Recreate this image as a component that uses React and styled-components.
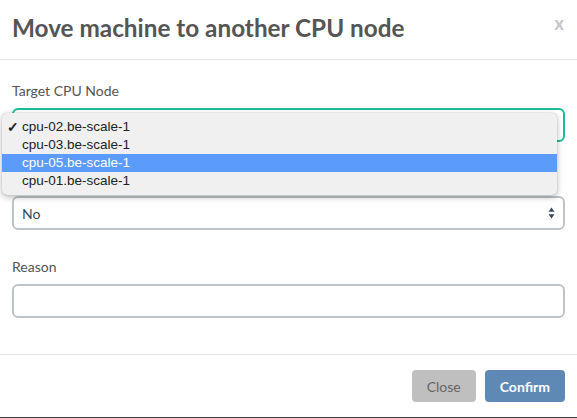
import React from "react"
import styled, { createGlobalStyle } from "styled-components"

const GlobalStyle = createGlobalStyle`
  html, body {
    margin: 0;
    padding: 0;
    background: #3a3a3a;
  }
  * {
    box-sizing: border-box;
  }
`

const Modal = styled.div`
  width: 577px;
  height: 417px;
  background: #fff;
  font-family: Lato, "Open Sans", sans-serif;
  color: #555;
  display: flex;
  flex-direction: column;
`

const Header = styled.div`
  height: 60px;
  padding: 13px 12px 0;
  border-bottom: 1px solid #e5e5e5;
  display: flex;
  justify-content: space-between;
  align-items: flex-start;
`

const Title = styled.h4`
  margin: 0;
  font-size: 24.3px;
  line-height: 29px;
  font-weight: 700;
  color: #555;
`

const CloseX = styled.span`
  font-size: 18px;
  font-weight: 700;
  line-height: 20px;
  color: #c4c4c4;
  margin-right: 1px;
`

const Body = styled.div`
  padding: 21px 12px 36px;
  display: flex;
  flex-direction: column;
  gap: 27px;
`

const Group = styled.div`
  position: relative;
  display: flex;
  flex-direction: column;
`

const Label = styled.label`
  font-size: 14px;
  line-height: 20px;
  height: 20px;
  margin-bottom: 7px;
  color: #555;
`

const Field = styled.div`
  height: 34px;
  border: 2px solid ${(p) => (p.focused ? "#1abc9c" : "#bdc3c7")};
  border-radius: 6px;
  padding: 0 8px;
  display: flex;
  align-items: center;
  justify-content: space-between;
  font-size: 14px;
  color: #34495e;
`

const Arrows = () => (
  <svg width="7" height="12" viewBox="0 0 7 12">
    <path d="M3.5 0.5 L6.5 4.8 L0.5 4.8 Z" fill="#34495e" />
    <path d="M3.5 11.5 L6.5 7.2 L0.5 7.2 Z" fill="#34495e" />
  </svg>
)

// native select popup, open over the first field
const Dropdown = styled.ul`
  position: absolute;
  left: -10px;
  top: 32px;
  width: 555px;
  margin: 0;
  padding: 5px 0;
  list-style: none;
  background: #f0f0f0;
  border-radius: 5px;
  box-shadow: 0 2px 6px rgba(0, 0, 0, 0.28), 0 0 1px rgba(0, 0, 0, 0.3);
  font-family: "Liberation Sans", Arial, sans-serif;
  font-size: 13.5px;
  z-index: 2;
`

const Option = styled.li`
  height: 18px;
  line-height: 18px;
  padding-left: 20px;
  position: relative;
  color: ${(p) => (p.active ? "#fff" : "#222")};
  background: ${(p) => (p.active ? "#5b9bfa" : "transparent")};
`

const Check = styled.span`
  position: absolute;
  left: 5px;
  top: 0;
  font-size: 14px;
  font-weight: 700;
`

const Footer = styled.div`
  border-top: 1px solid #e5e5e5;
  padding: 15px 12px;
  display: flex;
  justify-content: flex-end;
  gap: 9px;
`

const Button = styled.button`
  height: 32px;
  padding: 0 15px;
  border: none;
  border-radius: 4px;
  font-family: Lato, sans-serif;
  font-size: 14px;
  font-weight: ${(p) => (p.primary ? 700 : 400)};
  color: ${(p) => (p.primary ? "#fff" : "#666")};
  background: ${(p) => (p.primary ? "#5e89b4" : "#bfbfbf")};
`

const nodes = [
  { name: "cpu-02.be-scale-1", checked: true },
  { name: "cpu-03.be-scale-1" },
  { name: "cpu-05.be-scale-1", active: true },
  { name: "cpu-01.be-scale-1" },
]

export default function App() {
  return (
    <>
      <GlobalStyle />
      <Modal>
        <Header>
          <Title>Move machine to another CPU node</Title>
          <CloseX>x</CloseX>
        </Header>
        <Body>
          <Group>
            <Label>Target CPU Node</Label>
            <Field focused>
              <span />
              <Arrows />
            </Field>
            <Dropdown>
              {nodes.map((n) => (
                <Option key={n.name} active={n.active}>
                  {n.checked && <Check>✓</Check>}
                  {n.name}
                </Option>
              ))}
            </Dropdown>
          </Group>
          <Group>
            <Label />
            <Field>
              <span>No</span>
              <Arrows />
            </Field>
          </Group>
          <Group>
            <Label>Reason</Label>
            <Field />
          </Group>
        </Body>
        <Footer>
          <Button>Close</Button>
          <Button primary>Confirm</Button>
        </Footer>
      </Modal>
    </>
  )
}
